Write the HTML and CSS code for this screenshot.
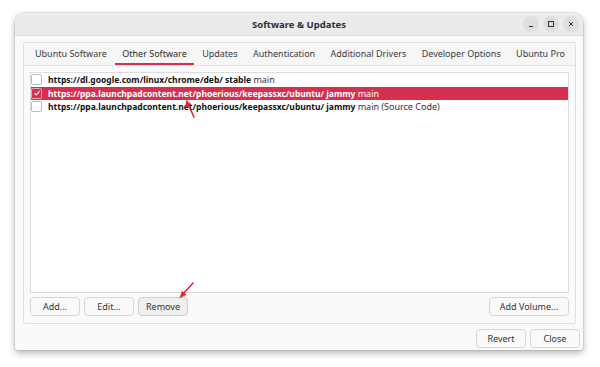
FILE: index.html
```html
<!DOCTYPE html>
<html>
<head>
<meta charset="utf-8">
<link rel="stylesheet" href="styles.css">
</head>
<body>
<div class="window">
  <header class="titlebar">
    <span class="title">Software &amp; Updates</span>
    <div class="controls">
      <span class="ctl"><svg width="8" height="8" viewBox="0 0 8 8"><path d="M2 6.5h4" stroke="#333" stroke-width="1"/></svg></span>
      <span class="ctl"><svg width="8" height="8" viewBox="0 0 8 8"><rect x="1.5" y="1.5" width="5" height="5" fill="none" stroke="#333" stroke-width="1"/></svg></span>
      <span class="ctl"><svg width="8" height="8" viewBox="0 0 8 8"><path d="M2 2l4 4M6 2l-4 4" stroke="#333" stroke-width="1"/></svg></span>
    </div>
  </header>
  <div class="content">
    <div class="notebook">
      <nav class="tabs">
        <span class="tab">Ubuntu Software</span>
        <span class="tab active">Other Software</span>
        <span class="tab">Updates</span>
        <span class="tab">Authentication</span>
        <span class="tab">Additional Drivers</span>
        <span class="tab">Developer Options</span>
        <span class="tab">Ubuntu Pro</span>
      </nav>
      <div class="page">
        <div class="list">
          <div class="row"><span class="check"></span><span class="txt"><b>https://dl.google.com/linux/chrome/deb/ stable</b> main</span></div>
          <div class="row selected"><span class="check on"><svg width="8" height="8" viewBox="0 0 8 8"><path d="M1.5 4.2l1.8 1.8 3.3-3.8" fill="none" stroke="#fff" stroke-width="1.1"/></svg></span><span class="txt"><b>https://ppa.launchpadcontent.net/phoerious/keepassxc/ubuntu/ jammy</b> main</span></div>
          <div class="row"><span class="check"></span><span class="txt"><b>https://ppa.launchpadcontent.net/phoerious/keepassxc/ubuntu/ jammy</b> main (Source Code)</span></div>
        </div>
        <div class="actions">
          <button class="btn">Add...</button>
          <button class="btn">Edit...</button>
          <button class="btn hover">Remove</button>
          <span class="spacer"></span>
          <button class="btn wide">Add Volume...</button>
        </div>
      </div>
    </div>
    <div class="footer">
      <button class="btn">Revert</button>
      <button class="btn">Close</button>
    </div>
  </div>
</div>
<svg class="annot" width="600" height="367" viewBox="0 0 600 367">
  <g stroke="#e0242a" stroke-width="1.6" fill="#e0242a" stroke-linecap="round">
    <path d="M194 117L188 104" fill="none"/>
    <path d="M186.5 100.5l-0.8 6.5 5.2-2.4z" stroke-width="0.6"/>
    <path d="M193 283L183 294" fill="none"/>
    <path d="M180 297.5l2.2-6.2 3.6 3.4z" stroke-width="0.6"/>
  </g>
</svg>
</body>
</html>
```
FILE: styles.css
```css
html, body {
  margin: 0;
  padding: 0;
  background: #ffffff;
}
body {
  width: 600px;
  height: 367px;
  overflow: hidden;
  position: relative;
  font-family: "Noto Sans", "DejaVu Sans", sans-serif;
  font-size: 9px;
  color: #303030;
}
.window {
  margin: 13px 0 0 15px;
  width: 568px;
  height: 337px;
  background: #fafafa;
  border-radius: 9px 9px 3px 3px;
  box-shadow: 0 3px 7px rgba(0,0,0,0.3), 0 0 0 1px rgba(0,0,0,0.07);
  display: flex;
  flex-direction: column;
  overflow: hidden;
}
.titlebar {
  height: 22px;
  flex: none;
  background: #ebebeb;
  border-bottom: 1px solid #dcdcdc;
  display: flex;
  align-items: center;
  justify-content: center;
  position: relative;
}
.title {
  font-weight: bold;
  font-size: 9.5px;
  color: #2e2e2e;
}
.controls {
  position: absolute;
  right: 4px;
  top: 3px;
  display: flex;
  gap: 4px;
}
.ctl {
  width: 16px;
  height: 16px;
  border-radius: 50%;
  background: #dedede;
  display: flex;
  align-items: center;
  justify-content: center;
}
.content {
  flex: 1;
  display: flex;
  flex-direction: column;
  padding: 6px 3px 3px 8px;
}
.notebook {
  margin-right: 4px;
  height: 280px;
  border: 1px solid #dedede;
  border-radius: 2px;
  display: flex;
  flex-direction: column;
  background: #fafafa;
}
.tabs {
  height: 22px;
  display: flex;
  justify-content: space-between;
  padding: 0 3px 0 4px;
  border-bottom: 1px solid #e3e3e3;
  background: #f6f6f6;
}
.tab {
  padding: 0 7px;
  display: flex;
  align-items: center;
  color: #3a3a3a;
  border-bottom: 2px solid transparent;
  padding-top: 1px;
}
.tab.active {
  border-bottom-color: #d7304f;
  color: #2a2a2a;
}
.page {
  flex: 1;
  display: flex;
  flex-direction: column;
  padding: 6px 6px 7px 6px;
}
.list {
  flex: 1;
  background: #ffffff;
  border: 1px solid #dcdcdc;
  padding-top: 0;
}
.row {
  height: 13.5px;
  display: flex;
  align-items: center;
  padding-left: 0;
  white-space: nowrap;
  color: #333;
}
.row b {
  color: #111;
  font-size: 8.5px;
}
.check {
  width: 9px;
  height: 9px;
  border: 1px solid #bdbdbd;
  border-radius: 2px;
  background: #fff;
  margin-right: 6px;
  display: flex;
  align-items: center;
  justify-content: center;
  flex: none;
}
.row.selected {
  background: #d7304f;
  color: #ffffff;
}
.row.selected b {
  color: #ffffff;
}
.check.on {
  background: #d7304f;
  border-color: rgba(255,255,255,0.55);
}
.actions {
  display: flex;
  gap: 4px;
  margin-top: 4px;
  height: 19px;
}
.spacer {
  flex: 1;
}
.btn {
  font-family: inherit;
  font-size: 9px;
  color: #333;
  background: #fafafa;
  border: 1px solid #d6d6d6;
  border-radius: 4px;
  height: 19px;
  width: 50px;
  padding: 0;
  display: flex;
  align-items: center;
  justify-content: center;
}
.btn.hover {
  background: #efefef;
  border-color: #d0d0d0;
}
.btn.wide {
  width: 80px;
}
.footer {
  display: flex;
  justify-content: flex-end;
  gap: 4px;
  margin-top: 5px;
}
.annot {
  position: absolute;
  left: 0;
  top: 0;
  pointer-events: none;
}
```
